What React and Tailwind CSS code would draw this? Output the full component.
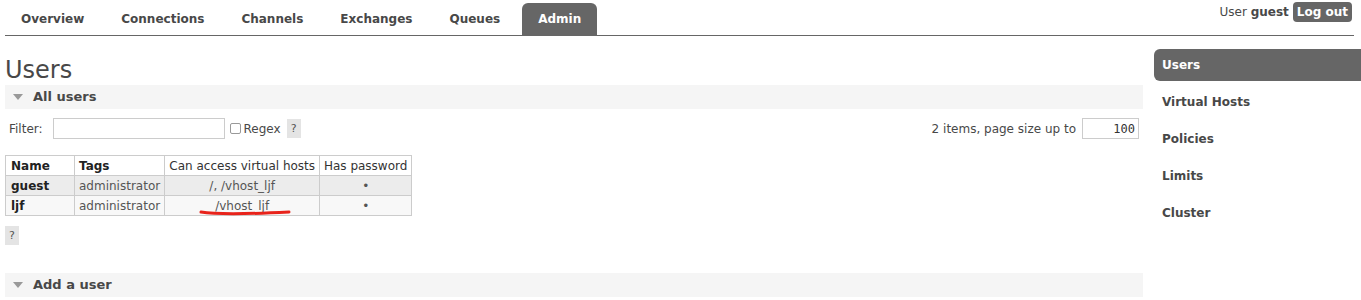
const tabs = ['Overview', 'Connections', 'Channels', 'Exchanges', 'Queues', 'Admin'];
const sideItems = ['Users', 'Virtual Hosts', 'Policies', 'Limits', 'Cluster'];

const users = [
  { name: 'guest', tags: 'administrator', vhosts: '/, /vhost_ljf', pw: true },
  { name: 'ljf', tags: 'administrator', vhosts: '/vhost_ljf', pw: true, marked: true },
];

function SectionBar({ title }) {
  return (
    <div className="flex items-center h-6 bg-[#f5f5f5] pl-[8px] gap-[10px]">
      <svg width="10" height="6" viewBox="0 0 10 6">
        <polygon points="0,0 10,0 5,6" fill="#999" />
      </svg>
      <span className="font-bold text-[13px] text-[#484848]">{title}</span>
    </div>
  );
}

function HelpButton() {
  return (
    <span className="inline-flex items-center justify-center w-[14px] h-[19px] bg-[#e4e4e4] text-[#555] text-[11px] leading-none">?</span>
  );
}

export default function App() {
  return (
    <div className="relative w-[1361px] h-[300px] overflow-hidden bg-white text-[12px] text-[#484848] font-['DejaVu_Sans',Verdana,sans-serif]">
      {/* header */}
      <div className="flex items-start pl-[5px] pr-[7px]">
        <div className="flex-1 flex items-end h-[36px] border-b border-[#666]">
          <div className="flex items-end -ml-[2px]">
            {tabs.map((t) => (
              <div
                key={t}
                className={`h-[32px] flex items-center font-bold text-[12px] rounded-t-[6px] ${
                  t === 'Admin' ? 'bg-[#666] text-white ml-[3px] px-[16px]' : 'text-[#484848] mr-[1px] px-[18px]'
                }`}
              >
                {t}
              </div>
            ))}
          </div>
        </div>
      </div>
      <div className="absolute top-[2px] right-[9px] flex items-center gap-[4px] text-[12px]">
        <span>
          User <b>guest</b>
        </span>
        <span className="bg-[#666] text-white font-bold px-[4px] h-[20px] flex items-center rounded-[4px]">Log out</span>
      </div>

      <div className="flex pl-[5px] pt-[13px]">
        {/* main */}
        <div className="w-[1138px]">
          <h1 className="text-[24px] leading-[24px] mt-[9px] mb-[3px] text-[#484848]">Users</h1>
          <SectionBar title="All users" />

          <div className="flex items-center justify-between mt-[9px] pl-[4px] pr-[4px]">
            <div className="flex items-center">
              <span>Filter:</span>
              <input className="ml-[10px] w-[172px] h-[21px] border border-[#ccc] bg-white outline-none" />
              <span className="ml-[5px] w-[11px] h-[11px] border border-[#999] rounded-[2px]"></span>
              <span className="ml-[3px] mr-[6px]">Regex</span>
              <HelpButton />
            </div>
            <div className="flex items-center">
              <span>2 items, page size up to</span>
              <input
                defaultValue="100"
                className="ml-[6px] w-[57px] h-[21px] border border-[#ccc] text-right pr-[3px] font-['DejaVu_Sans_Mono',monospace] text-[12px] text-[#333] outline-none"
              />
            </div>
          </div>

          <table className="mt-[16px] border-collapse text-[12px] whitespace-nowrap">
            <thead>
              <tr className="h-[20px]">
                <th className="border border-[#ccc] text-left font-bold text-[#222] px-[5px] w-[69px]">Name</th>
                <th className="border border-[#ccc] text-left font-bold text-[#222] px-[4px] w-[90px]">Tags</th>
                <th className="border border-[#ccc] font-normal text-[#333] px-[4px] w-[155px]">Can access virtual hosts</th>
                <th className="border border-[#ccc] font-normal text-[#333] px-[3px] w-[92px]">Has password</th>
              </tr>
            </thead>
            <tbody>
              {users.map((u, i) => (
                <tr key={u.name} className={`h-[20px] ${i === 0 ? 'bg-[#ececec]' : 'bg-[#f8f8f8]'}`}>
                  <td className="border border-[#ccc] px-[5px] font-bold text-[#222]">{u.name}</td>
                  <td className="border border-[#ccc] px-[4px] text-[#555]">{u.tags}</td>
                  <td className="border border-[#ccc] text-center text-[#555] relative">
                    {u.vhosts}
                    {u.marked && (
                      <svg className="absolute left-[34px] top-[12px]" width="92" height="10" viewBox="0 0 92 10">
                        <path d="M2 4 C 20 7, 50 6, 90 4" stroke="#e8231b" strokeWidth="3" fill="none" strokeLinecap="round" />
                      </svg>
                    )}
                  </td>
                  <td className="border border-[#ccc] text-center text-[#555]">•</td>
                </tr>
              ))}
            </tbody>
          </table>

          <div className="mt-[10px]">
            <HelpButton />
          </div>

          <div className="mt-[28px]">
            <SectionBar title="Add a user" />
          </div>
        </div>

        {/* sidebar */}
        <div className="ml-[11px] flex-1 flex flex-col">
          {sideItems.map((s) => (
            <div key={s} className="h-[37px] flex items-start">
              <div
                className={`w-full h-[32px] flex items-center pl-[8px] font-bold text-[12px] ${
                  s === 'Users' ? 'bg-[#666] text-white rounded-l-[6px]' : 'text-[#484848]'
                }`}
              >
                {s}
              </div>
            </div>
          ))}
        </div>
      </div>
    </div>
  );
}
